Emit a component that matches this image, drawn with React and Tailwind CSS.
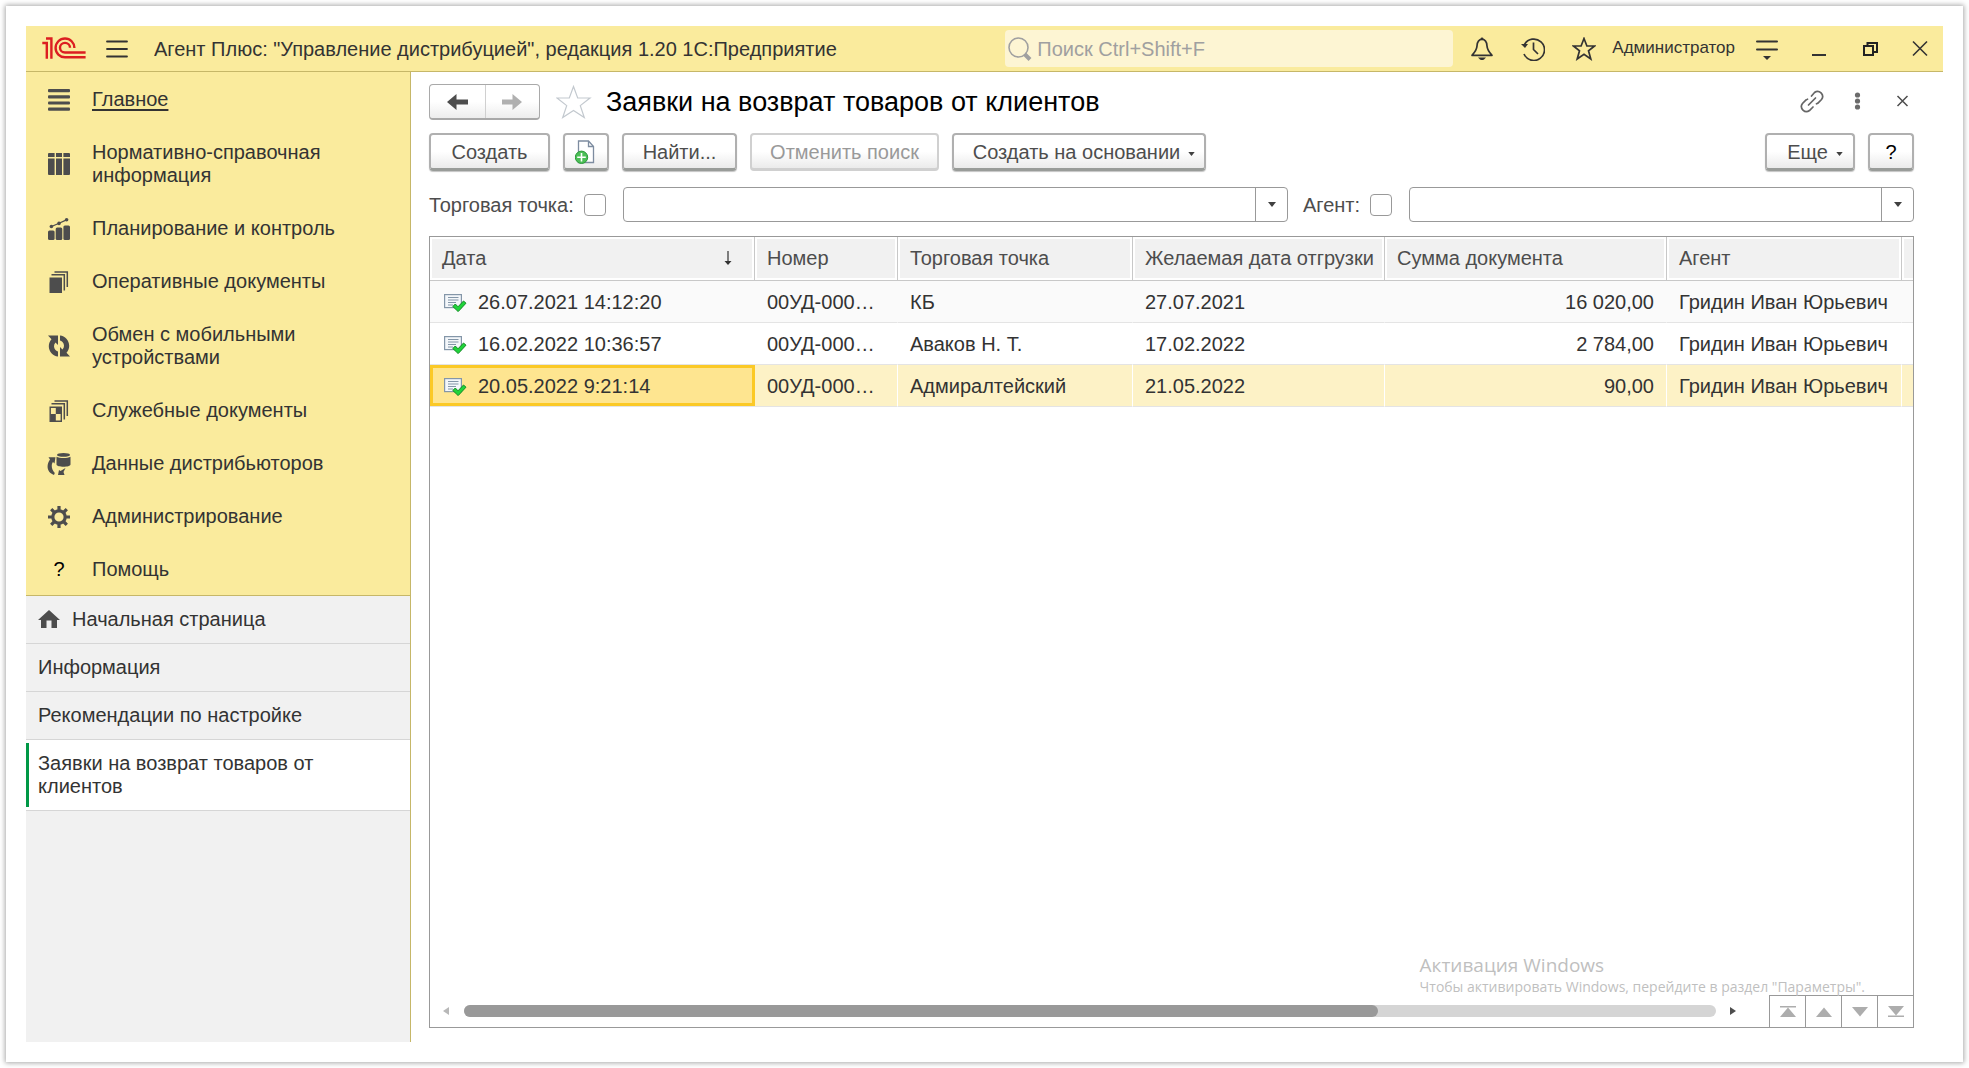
import { useState } from 'react';
import clsx from 'clsx';

const SECTIONS = [
  { label: 'Главное', icon: MainIcon, current: true },
  { label: 'Нормативно-справочная информация', icon: CatalogIcon },
  { label: 'Планирование и контроль', icon: PlanningIcon },
  { label: 'Оперативные документы', icon: DocumentsIcon },
  { label: 'Обмен с мобильными устройствами', icon: ExchangeIcon },
  { label: 'Служебные документы', icon: ServiceDocsIcon },
  { label: 'Данные дистрибьюторов', icon: DistributorIcon },
  { label: 'Администрирование', icon: GearIcon },
  { label: 'Помощь', icon: HelpIcon },
];

const TABS = [
  { label: 'Начальная страница', home: true },
  { label: 'Информация' },
  { label: 'Рекомендации по настройке' },
  { label: 'Заявки на возврат товаров от клиентов', active: true },
];

const ROWS = [
  { date: '26.07.2021 14:12:20', number: '00УД-000001', point: 'КБ', ship: '27.07.2021', sum: '16 020,00', agent: 'Гридин Иван Юрьевич' },
  { date: '16.02.2022 10:36:57', number: '00УД-000001', point: 'Аваков Н. Т.', ship: '17.02.2022', sum: '2 784,00', agent: 'Гридин Иван Юрьевич' },
  { date: '20.05.2022 9:21:14', number: '00УД-000002', point: 'Адмиралтейский', ship: '21.05.2022', sum: '90,00', agent: 'Гридин Иван Юрьевич' },
];

/* ---------- section icons ---------- */

function MainIcon() {
  return (
    <svg viewBox="0 0 22 22" className="w-[22px] h-[22px]" fill="#4d4d4d">
      <rect y="0" width="22" height="3.2" rx="1" />
      <rect y="6.2" width="22" height="3.2" rx="1" />
      <rect y="12.4" width="22" height="3.2" rx="1" />
      <rect y="18.6" width="22" height="3.2" rx="1" />
    </svg>
  );
}

function CatalogIcon() {
  return (
    <svg viewBox="0 0 22 22" className="w-[22px] h-[22px]" fill="#4d4d4d">
      <path d="M1 0h5.6v4H0V1a1 1 0 0 1 1-1zM8 0h6v4H8zM15.4 0H21a1 1 0 0 1 1 1v3h-6.6z" />
      <path d="M0 5.4h6.6V22H1a1 1 0 0 1-1-1zM8 5.4h6V22H8zM15.4 5.4H22V21a1 1 0 0 1-1 1h-5.6z" />
    </svg>
  );
}

function PlanningIcon() {
  return (
    <svg viewBox="0 0 22 22" className="w-[22px] h-[22px]" fill="#4d4d4d">
      <rect x="0" y="12.5" width="6.6" height="9.5" rx="1.5" />
      <rect x="7.7" y="9.5" width="6.6" height="12.5" rx="1.5" />
      <rect x="15.4" y="7.5" width="6.6" height="14.5" rx="1.5" />
      <path d="M3.5 8.5L10.5 5.5L18.5 1.8" stroke="#4d4d4d" strokeWidth="1.3" fill="none" />
      <circle cx="3.4" cy="8.5" r="1.8" />
      <circle cx="11" cy="5.4" r="1.8" />
      <circle cx="18.6" cy="1.8" r="1.8" />
    </svg>
  );
}

function DocumentsIcon() {
  return (
    <svg viewBox="0 0 22 22" className="w-[22px] h-[22px]">
      <path d="M1.5 6.5H14V22H1.5z" fill="#4d4d4d" />
      <path d="M3.5 3.8H16.3V19.5M6.5 1H19.3V16" fill="none" stroke="#4d4d4d" strokeWidth="1.5" />
    </svg>
  );
}

function ExchangeIcon() {
  return (
    <svg viewBox="0 0 22 22" className="w-[22px] h-[22px]" fill="#4d4d4d">
      <path d="M0 .5H10V10L7.5 7.5C5.500 9.500 5.500 13 7.500 15C8.300 15.900 9.300 16.400 10 16.500V21.500C5 21 .8 16.500 .8 11.200C.8 8.500 1.800 6 3.500 4.200z" />
      <path d="M22 21.500H12V12L14.500 14.500C16.500 12.500 16.500 9 14.500 7C13.700 6.100 12.700 5.600 12 5.500V.5C17 1 21.200 5.500 21.200 10.800C21.200 13.500 20.200 16 18.500 17.800z" />
    </svg>
  );
}

function ServiceDocsIcon() {
  return (
    <svg viewBox="0 0 22 22" className="w-[22px] h-[22px]">
      <path d="M2.2 7.2H13.3V21.3H2.2z" fill="none" stroke="#4d4d4d" strokeWidth="1.4" />
      <path d="M7.8 7.5H13V14H7.8zM2.5 14H7.8V21H2.5z" fill="#4d4d4d" />
      <path d="M3.5 3.8H16.3V19.5M6.5 1H19.3V16" fill="none" stroke="#4d4d4d" strokeWidth="1.5" />
    </svg>
  );
}

function DistributorIcon() {
  return (
    <svg viewBox="0 0 24 22" className="w-6 h-[22px]" fill="#4d4d4d">
      <ellipse cx="16.5" cy="1.9" rx="6.5" ry="1.9" />
      <path d="M9.500 3.800C12.500 5.400 20.500 5.400 23.500 3.800V11.500C23.500 14.500 9.500 14.500 9.500 11.500z" />
      <path d="M1.500 4.300H8.500L7.500 10.500L6 9C4 11.500 4.300 16.500 7.800 20L7 22C.5 20 -1.500 13 3 6.500z" />
      <path d="M18.500 15L16.500 19L17.500 22H11L12 17L13.500 18z" />
    </svg>
  );
}

function GearIcon() {
  return (
    <svg viewBox="0 0 22 22" className="w-[22px] h-[22px]" stroke="#4d4d4d" fill="none">
      <circle cx="11" cy="11" r="6.2" strokeWidth="3.2" />
      <path
        d="M11 0V4M11 18V22M0 11H4M18 11H22M3.200 3.200L6 6M16 16L18.800 18.800M18.800 3.200L16 6M6 16L3.200 18.800"
        strokeWidth="3.2"
      />
    </svg>
  );
}

function HelpIcon() {
  return <span className="w-[22px] text-center text-black">?</span>;
}

/* ---------- small drawings ---------- */

function Logo() {
  return (
    <svg viewBox="0 0 44 23" className="w-11 h-[23px]" fill="none" stroke="#dc1e21" strokeWidth="2.4">
      <path d="M.3 6H4.800V21.800M4 1.500H9.400V21.800" />
      <path d="M32.400 10.900A9.400 9.400 0 1 0 23 20.300H43.600" />
      <path d="M28 10.700A5 4.800 0 1 0 23 15.500H43.600" />
    </svg>
  );
}

function Caret({ className = 'w-2 h-[5px]' }) {
  return (
    <svg viewBox="0 0 8 5" className={className} fill="#404040">
      <path d="M0 0H8L4 5z" />
    </svg>
  );
}

function RowIcon() {
  return (
    <svg viewBox="0 0 24 20" className="w-6 h-5 shrink-0">
      <rect x="1.600" y="2.600" width="16.800" height="13" fill="#f4f7fa" stroke="#8496a8" strokeWidth="1.200" />
      <path d="M5 5.500H15.500M5 8H15.500M5 10.500H13M5 13H10" stroke="#8496a8" strokeWidth="1" />
      <path d="M9.800 14.500L12.300 12L15 14.800L20.500 9L23 11.200L15.200 19.600z" fill="#1fd43a" stroke="#118a22" strokeWidth="1" />
    </svg>
  );
}

/* ---------- controls ---------- */

function IconButton({ label, children }) {
  return (
    <button type="button" aria-label={label} className="w-6 h-6 shrink-0 flex items-center justify-center">
      {children}
    </button>
  );
}

function Button({ className, children, ...rest }) {
  return (
    <button
      type="button"
      className={clsx(
        'h-[38px] flex items-center justify-center rounded border-2 border-b-[3px] border-[#b0b0b0] border-b-[#999c99] bg-linear-to-b from-white from-50% to-[#ebebeb] text-[#4d4d4d] shadow-[0_1px_1px_#c4c4c4]',
        'disabled:border-[#d0d0d0] disabled:text-[#999] disabled:shadow-none',
        className
      )}
      {...rest}
    >
      {children}
    </button>
  );
}

function Filter({ id, label, className }) {
  const [enabled, setEnabled] = useState(false);
  const [value, setValue] = useState('');

  return (
    <div className={clsx('flex items-center min-w-0', className)}>
      <label htmlFor={id} className="shrink-0 text-[#4d4d4d]">{label}</label>
      <input
        id={id}
        type="checkbox"
        checked={enabled}
        onChange={(e) => setEnabled(e.target.checked)}
        className="appearance-none ml-[10px] mr-[17px] w-[22px] h-[22px] shrink-0 rounded-sm border border-[#999] bg-white checked:bg-[#fbc926]"
      />
      <div className="flex-1 min-w-0 h-[35px] flex rounded border border-[#999] bg-white overflow-hidden">
        <input
          type="text"
          aria-label={label}
          value={value}
          onChange={(e) => setValue(e.target.value)}
          className="flex-1 min-w-0 px-2 outline-none"
        />
        <button type="button" aria-label="Выбрать" className="w-8 border-l border-[#999] flex items-center justify-center">
          <Caret />
        </button>
      </div>
    </div>
  );
}

/* ---------- page parts ---------- */

function TitleBar() {
  return (
    <header className="h-[46px] shrink-0 flex items-center bg-[#faeb9d] border-b border-[#c6b768] pl-4 pr-[11px] text-[#333]">
      <Logo />
      <button type="button" aria-label="Меню" className="ml-5 shrink-0">
        <svg viewBox="0 0 22 18" className="w-[22px] h-[18px]" stroke="#333" strokeWidth="1.8" strokeLinecap="round">
          <path d="M1 1.500H21M1 9H21M1 16.500H21" />
        </svg>
      </button>
      <div className="ml-[26px] flex-1 truncate">
        Агент Плюс: "Управление дистрибуцией", редакция 1.20 1С:Предприятие
      </div>

      <label className="w-[448px] h-[37px] mr-[17px] pl-[3px] flex items-center rounded-sm bg-[#fdf5d3]">
        <svg viewBox="0 0 24 24" className="w-6 h-6 shrink-0" fill="none" stroke="#a0a0a0">
          <circle cx="10.5" cy="10.5" r="9.5" strokeWidth="1.6" />
          <path d="M16.500 17L22 22.500" strokeWidth="4" />
        </svg>
        <input
          type="search"
          aria-label="Поиск"
          placeholder="Поиск Ctrl+Shift+F"
          className="flex-1 ml-[5px] outline-none placeholder:text-[#a0a0a0]"
        />
      </label>

      <div className="flex items-center gap-[27px]">
        <IconButton label="Оповещения">
          <svg viewBox="0 0 24 24" className="w-6 h-6" fill="none" stroke="#333" strokeWidth="1.7">
            <path d="M12 2.200C8.500 2.500 7.200 5.500 7 9C6.800 12.500 5.500 14.500 2 18.300H22C18.500 14.500 17.200 12.500 17 9C16.800 5.500 15.500 2.500 12 2.200z" strokeLinejoin="round" />
            <path d="M8 20.500H16L14 22.500Q12 23.500 10 22.500z" fill="#333" stroke="none" />
            <circle cx="12" cy="1.8" r="1.4" fill="#333" stroke="none" />
          </svg>
        </IconButton>
        <IconButton label="История">
          <svg viewBox="0 0 24 24" className="w-6 h-6" fill="none" stroke="#333" strokeWidth="1.7">
            <path d="M3.500 7.500A10.700 10.700 0 1 1 3 17" />
            <path d="M12.500 5.500V12.500L17 17" />
            <path d="M0 7H7L4 11z" fill="#333" stroke="none" />
          </svg>
        </IconButton>
        <IconButton label="Избранное">
          <svg viewBox="0 0 24 24" className="w-6 h-6" fill="none" stroke="#333" strokeWidth="1.7">
            <path d="M12 1.500L14.900 9H22.500L16.500 13.800L18.800 22L12 17.300L5.200 22L7.500 13.800L1.500 9H9.100z" />
          </svg>
        </IconButton>
      </div>
      <a href="#user" className="ml-4 mr-5 text-[17px] leading-6 pb-0.5">Администратор</a>
      <div className="flex items-center gap-[27px]">
        <IconButton label="Настройки">
          <svg viewBox="0 0 24 24" className="w-6 h-6" fill="none" stroke="#333" strokeWidth="2" strokeLinecap="round">
            <path d="M2 4.500H22M2 12.500H22" />
            <path d="M8 19H16L12 23z" fill="#333" stroke="none" />
          </svg>
        </IconButton>
        <IconButton label="Свернуть">
          <svg viewBox="0 0 24 24" className="w-6 h-6" stroke="#333" strokeWidth="2">
            <path d="M6 18H20" />
          </svg>
        </IconButton>
        <IconButton label="Развернуть">
          <svg viewBox="0 0 24 24" className="w-6 h-6" fill="none" stroke="#222" strokeWidth="2">
            <path d="M7 9H16V18H7zM10.500 9V6H20V15H16" />
          </svg>
        </IconButton>
        <IconButton label="Закрыть">
          <svg viewBox="0 0 24 24" className="w-6 h-6" stroke="#333" strokeWidth="1.6">
            <path d="M5 4.500L19 18.500M19 4.500L5 18.500" />
          </svg>
        </IconButton>
      </div>
    </header>
  );
}

function Sidebar() {
  return (
    <aside className="w-[385px] shrink-0 flex flex-col border-r border-[#c6b768] bg-[#f1f1f1] text-[#333] leading-[23px]">
      <nav className="bg-[#faeb9d] border-b border-[#c6b768]">
        {SECTIONS.map(({ label, icon: Icon, current }) => (
          <a key={label} href="#section" className="flex items-center pt-4 pb-[14px] pl-[21px] pr-12">
            <span className="w-6 shrink-0 flex justify-center">
              <Icon />
            </span>
            <span className={clsx('ml-[21px]', current && 'underline underline-offset-3')}>{label}</span>
          </a>
        ))}
      </nav>
      <nav>
        {TABS.map((tab) => (
          <a
            key={tab.label}
            href="#tab"
            className={clsx('relative flex items-center gap-3 pl-3 pr-16 py-3 border-b border-[#d6d6d6]', tab.active && 'bg-white')}
          >
            {tab.active && <span className="absolute left-0 inset-y-[3px] w-[3px] bg-[#009846]" />}
            {tab.home && (
              <svg viewBox="0 0 22 20" className="w-[22px] h-5 shrink-0" fill="#4d4d4d">
                <path d="M11 0L22 10H19V18H13.500V10.500H8.500V18H3V10H0z" />
              </svg>
            )}
            {tab.label}
          </a>
        ))}
      </nav>
    </aside>
  );
}

function FormHeader() {
  return (
    <div className="flex items-center">
      <div className="h-9 flex rounded border border-[#a9a9a9] border-b-2 bg-linear-to-b from-white from-50% to-[#ededed]">
        <button type="button" aria-label="Назад" className="w-[55px] flex items-center justify-center">
          <svg viewBox="0 0 22 16" className="w-[22px] h-4" fill="#4d4d4d">
            <path d="M0 8L9.500 0V5.500H21V10.500H9.500V16z" />
          </svg>
        </button>
        <button type="button" aria-label="Вперед" className="w-[54px] flex items-center justify-center border-l border-[#d0d0d0]">
          <svg viewBox="0 0 22 16" className="w-[22px] h-4" fill="#b0b0b0">
            <path d="M20 8L10.500 0V5.500H0V10.500H10.500V16z" />
          </svg>
        </button>
      </div>
      <button type="button" aria-label="В избранное" className="ml-4">
        <svg viewBox="0 0 36 34" className="w-9 h-[34px]" fill="none" stroke="#c3c9cf" strokeWidth="1.2">
          <path d="M17.500 1.500L21.700 13H34L24.300 20.600L28.300 32.500L17.500 25.400L6.700 32.500L10.700 20.600L1 13H13.300z" />
        </svg>
      </button>
      <h1 className="ml-[14px] flex-1 text-[27px] leading-9 text-black truncate">Заявки на возврат товаров от клиентов</h1>
      <div className="flex items-center gap-[21px]">
        <IconButton label="Получить ссылку">
          <svg viewBox="0 0 24 24" className="w-6 h-6" fill="none" stroke="#666" strokeWidth="1.7" strokeLinecap="round">
            <path d="M11.500 6L14.500 2.500A5 5 0 0 1 21.500 9.500L18 13A5 5 0 0 1 16.500 13.800" />
            <path d="M13 17L9.500 20.500A5 5 0 0 1 2.500 13.500L6 10A5 5 0 0 1 7.500 9.200" />
            <path d="M8.500 15L15.500 8" />
          </svg>
        </IconButton>
        <IconButton label="Дополнительно">
          <svg viewBox="0 0 24 24" className="w-6 h-6" fill="#6b6b6b">
            <circle cx="12.5" cy="5" r="2.6" />
            <circle cx="12.5" cy="11" r="2.6" />
            <circle cx="12.5" cy="17" r="2.6" />
          </svg>
        </IconButton>
        <IconButton label="Закрыть форму">
          <svg viewBox="0 0 24 24" className="w-6 h-6" stroke="#4d4d4d" strokeWidth="1.5">
            <path d="M7.500 6L17.500 16M17.500 6L7.500 16" />
          </svg>
        </IconButton>
      </div>
    </div>
  );
}

function Toolbar() {
  return (
    <div className="mt-[13px] flex gap-[13px]">
      <Button className="w-[121px]">Создать</Button>
      <Button className="w-[46px]" aria-label="Создать копированием">
        <svg viewBox="0 0 22 24" className="w-[22px] h-6">
          <path d="M3.500 1H13.500L18.500 6.500V22.500H3.500z" fill="#fff" stroke="#7d8ca0" strokeWidth="1.3" />
          <path d="M13.500 1V6.500H18.500" fill="none" stroke="#7d8ca0" strokeWidth="1.3" />
          <circle cx="6.5" cy="17.3" r="6.2" fill="#4cbf57" stroke="#2b9a3a" strokeWidth="1" />
          <path d="M6.500 13V21.600M2.200 17.300H10.800" stroke="#fff" strokeWidth="1.6" />
        </svg>
      </Button>
      <Button className="w-[115px]">Найти...</Button>
      <Button className="w-[189px]" disabled>Отменить поиск</Button>
      <Button className="w-[254px] gap-2 pl-[10px]">
        Создать на основании
        <Caret className="mt-1 w-[7px] h-1" />
      </Button>
      <div className="flex-1" />
      <Button className="w-[90px] gap-2 pl-[10px]">
        Еще
        <Caret className="mt-1 w-[7px] h-1" />
      </Button>
      <Button className="w-[46px]" aria-label="Справка">
        <span className="text-black">?</span>
      </Button>
    </div>
  );
}

function HeadCell({ children }) {
  return (
    <th scope="col" className="h-[44px] p-0 font-normal text-left border-r border-b border-[#c8c8c8]">
      <div className="h-[43px] px-[10px] pb-0.5 flex items-center justify-between border-2 border-white bg-[#f1f1f1] whitespace-nowrap overflow-hidden">
        {children}
      </div>
    </th>
  );
}

function RequestsTable() {
  const [selected, setSelected] = useState(2);

  return (
    <table className="w-full table-fixed border-separate border-spacing-0 text-[#333]">
      <colgroup>
        <col className="w-[325px]" />
        <col className="w-[143px]" />
        <col className="w-[235px]" />
        <col className="w-[252px]" />
        <col className="w-[282px]" />
        <col className="w-[235px]" />
        <col className="w-[11px]" />
      </colgroup>
      <thead className="text-[#4d4d4d]">
        <tr>
          <HeadCell>
            Дата
            <svg viewBox="0 0 8 14" className="w-2 h-[14px] mr-[10px]" fill="#333">
              <path d="M3.400 0H4.600V10H7.500L4 14L.5 10H3.400z" />
            </svg>
          </HeadCell>
          <HeadCell>Номер</HeadCell>
          <HeadCell>Торговая точка</HeadCell>
          <HeadCell>Желаемая дата отгрузки</HeadCell>
          <HeadCell>Сумма документа</HeadCell>
          <HeadCell>Агент</HeadCell>
          <td className="p-0 border-b border-[#c8c8c8]">
            <div className="h-[43px] border-2 border-r-0 border-white bg-[#f1f1f1]" />
          </td>
        </tr>
      </thead>
      <tbody>
        {ROWS.map((row, i) => {
          const active = i === selected;
          const striped = !active && i % 2 === 0;
          const cell = clsx(
            'h-[42px] px-3 py-0 border-b border-r border-b-[#e4e4e4] truncate',
            active ? 'bg-[#fdf2c6] border-r-white' : 'border-r-transparent',
            striped && 'bg-[#fafafa]'
          );
          return (
            <tr key={row.date} onClick={() => setSelected(i)}>
              <td className={clsx('h-[42px] p-0 border-b border-[#e4e4e4]', striped && 'bg-[#fafafa]')}>
                <div
                  className={clsx(
                    'h-[41px] pl-[10px] flex items-center gap-[11px] border-3',
                    active ? 'border-[#fbc926] bg-[#fee590]' : 'border-transparent'
                  )}
                >
                  <RowIcon />
                  {row.date}
                </div>
              </td>
              <td className={cell}>{row.number}</td>
              <td className={cell}>{row.point}</td>
              <td className={cell}>{row.ship}</td>
              <td className={clsx(cell, 'text-right')}>{row.sum}</td>
              <td className={cell}>{row.agent}</td>
              <td className={clsx('p-0 border-b border-[#e4e4e4]', active && 'bg-[#fdf2c6]', striped && 'bg-[#fafafa]')} />
            </tr>
          );
        })}
      </tbody>
    </table>
  );
}

function ListFooter() {
  const arrows = [
    { label: 'В начало', d: 'M0 1H16V2.500H0zM8 2.500L16 12H0z' },
    { label: 'Вверх', d: 'M8 2.500L16 12H0z' },
    { label: 'Вниз', d: 'M0 2H16L8 11.500z' },
    { label: 'В конец', d: 'M0 1H16L8 10.500zM0 10.500H16V12H0z' },
  ];

  return (
    <div className="h-8 flex items-center">
      <svg viewBox="0 0 6 8" className="w-[6px] h-2 ml-[13px]" fill="#b8b8b8">
        <path d="M6 0V8L0 4z" />
      </svg>
      <div className="ml-[15px] mr-[14px] flex-1 h-3 rounded-full bg-[#d5d5d5]">
        <div className="w-[73%] h-full rounded-full bg-[#999]" />
      </div>
      <svg viewBox="0 0 6 8" className="w-[6px] h-2 mr-[33px]" fill="#4d4d4d">
        <path d="M0 0V8L6 4z" />
      </svg>
      {arrows.map(({ label, d }) => (
        <button
          key={label}
          type="button"
          aria-label={label}
          className="w-9 h-full flex items-center justify-center border-l border-t border-[#999]"
        >
          <svg viewBox="0 0 16 13" className="w-4 h-[13px]" fill="#adadad">
            <path d={d} />
          </svg>
        </button>
      ))}
    </div>
  );
}

export default function App() {
  return (
    <div className="min-h-screen p-1.5 flex bg-white text-[20px] font-['Liberation_Sans',Arial,sans-serif]">
      <div className="flex-1 min-w-0 p-5 flex flex-col bg-white shadow-[0_0_5px_1px_#a8a8a8]">
        <TitleBar />
        <div className="flex-1 flex">
          <Sidebar />
          <main className="flex-1 min-w-0 pt-3 pl-[18px] pr-[29px] pb-[14px] flex flex-col">
            <FormHeader />
            <Toolbar />
            <div className="mt-4 flex gap-[15px]">
              <Filter id="point" label="Торговая точка:" className="flex-[859]" />
              <Filter id="agent" label="Агент:" className="flex-[611]" />
            </div>
            <div className="relative mt-[14px] flex-1 flex flex-col justify-between border border-[#999]">
              <RequestsTable />
              <ListFooter />
              <div className="absolute right-12 bottom-[30px] font-['Open_Sans','Noto_Sans',sans-serif] text-[#bfbfbf] pointer-events-none">
                <div className="text-[19px] leading-6">Активация Windows</div>
                <div className="text-[14px] leading-5 whitespace-nowrap">Чтобы активировать Windows, перейдите в раздел "Параметры".</div>
              </div>
            </div>
          </main>
        </div>
      </div>
    </div>
  );
}
